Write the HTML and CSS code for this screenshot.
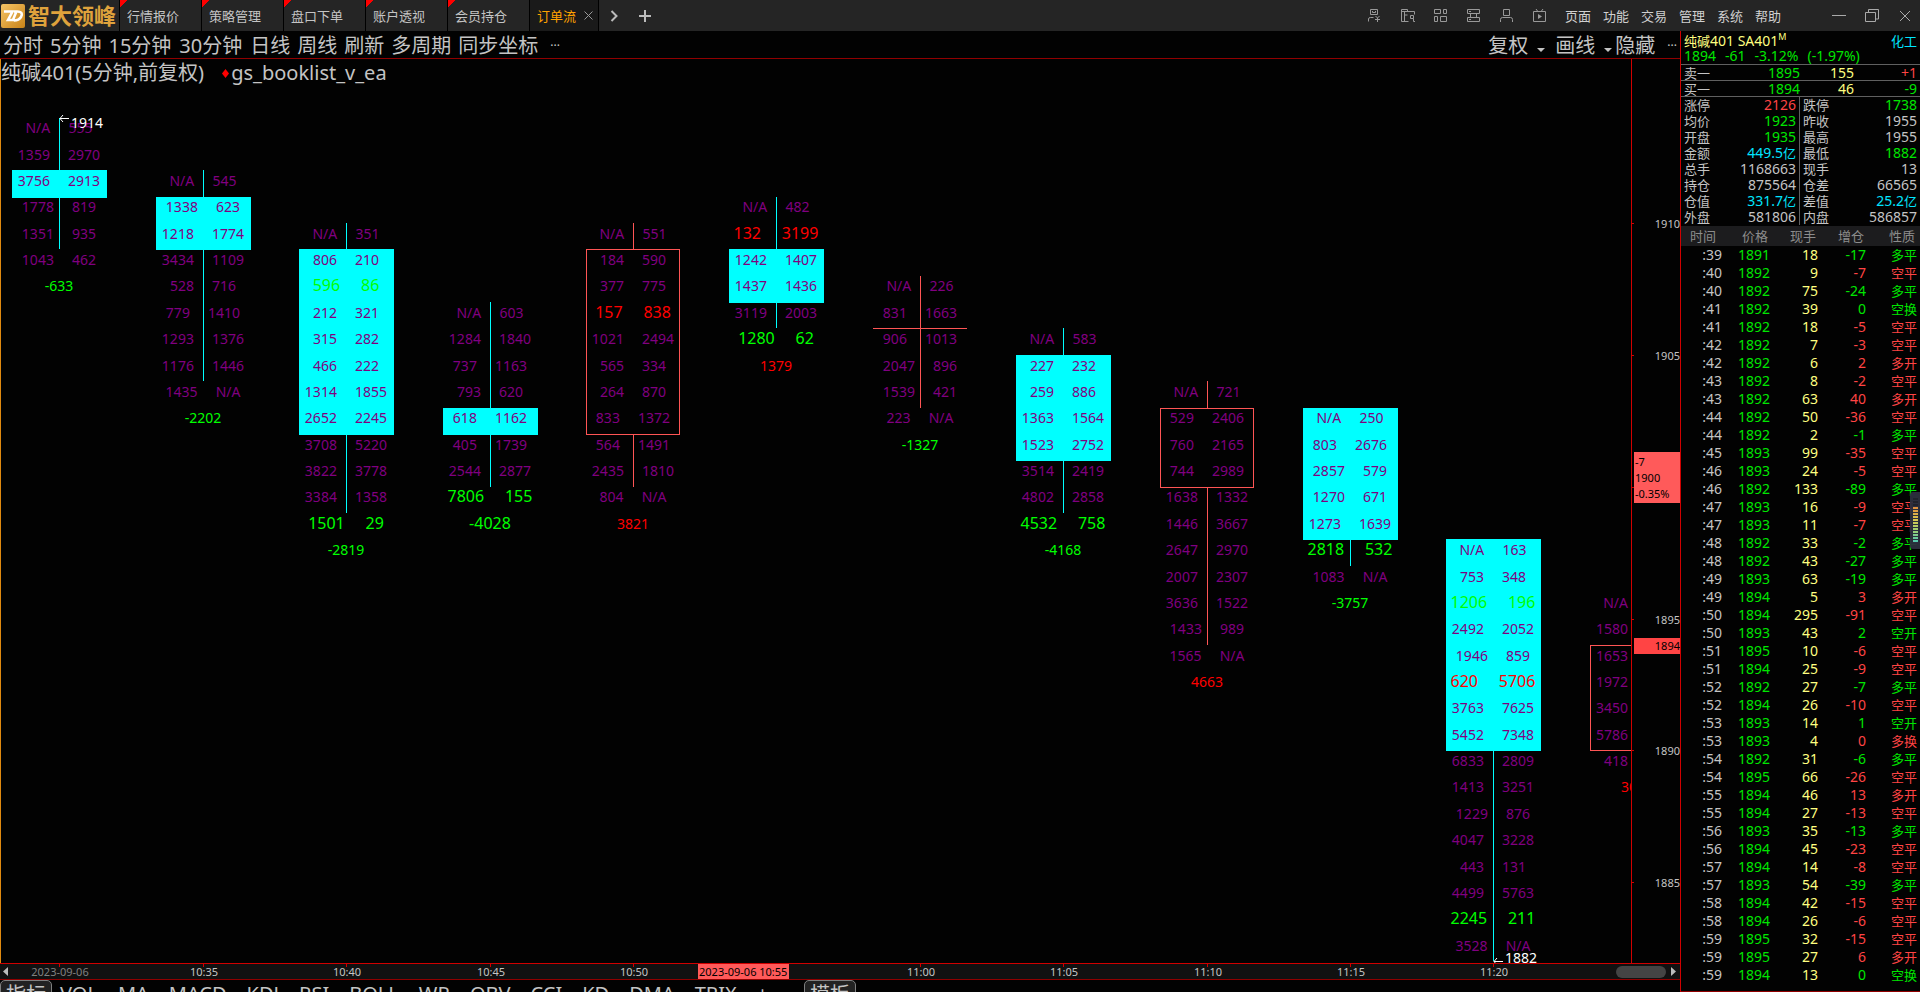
FILE: index.html
```html
<!DOCTYPE html>
<html lang="zh-CN">
<head>
<meta charset="utf-8">
<title>智大领峰</title>
<link rel="stylesheet" href="styles.css">
</head>
<body>
<header class="topbar">
  <div class="brand">
    <svg class="brand-mark" viewBox="0 0 24 24" aria-hidden="true">
      <defs><linearGradient id="gold" x1="0" y1="0" x2="1" y2="1"><stop offset="0" stop-color="#f6c566"/><stop offset="1" stop-color="#c98318"/></linearGradient></defs>
      <rect width="24" height="24" rx="2" fill="url(#gold)"/>
      <path d="M3 7.500h8.500L7 16h4.500M11.500 17l3.500-8.500M13 7.500h3c5.500 0 5.500 3 4 5.500c-1.500 2.500-3.500 3.500-7 3.500" fill="none" stroke="#fff" stroke-width="2.600"/>
    </svg>
    <span class="brand-name">智大领峰</span>
  </div>
  <nav class="tabs">
    <button class="tab">行情报价</button>
    <button class="tab">策略管理</button>
    <button class="tab">盘口下单</button>
    <button class="tab">账户透视</button>
    <button class="tab">会员持仓</button>
    <button class="tab tab-active">订单流
      <svg width="9" height="9" viewBox="0 0 9 9" aria-hidden="true"><path d="M.5.5l8 8M8.500.5l-8 8" stroke="#999" fill="none"/></svg>
    </button>
    <button class="tab-tool" aria-label="下一页"><svg width="8" height="12" viewBox="0 0 8 12"><path d="M1.500 1l5 5-5 5" stroke="#bbb" stroke-width="2" fill="none"/></svg></button>
    <button class="tab-tool" aria-label="新建"><svg width="12" height="12" viewBox="0 0 12 12"><path d="M6 0v12M0 6h12" stroke="#bbb" stroke-width="2" fill="none"/></svg></button>
  </nav>
  <div class="icons">
    <button aria-label="资金账户"><svg viewBox="0 0 13 13"><path d="M2.500.5h7v5h-7zM4.500 2v1.500h3V2M.5 12.500V10q0-1.500 2-1.500h3M7.500 7l2 2 2-2M9.500 9v4M7 10.500h5"/></svg></button>
    <button aria-label="行情查询"><svg viewBox="0 0 13 13"><path d="M13.500 5.500V2.500H.5M.5.5v12h7M.5.5h6v2M3.500 3v9M3.500 6h3M9.500 6.500h3v3h-3zM12.500 9.500v3h1.500"/></svg></button>
    <button aria-label="布局"><svg viewBox="0 0 13 13"><path d="M.5.5h6v4h-6zM9.500.5h3v4h-3zM.5 7.500h3v5h-3zM6.500 7.500h6v5h-6z"/></svg></button>
    <button aria-label="服务器"><svg viewBox="0 0 13 13"><path d="M.5.5h12v4H.5zM.5 8.500h12v4H.5zM3.500 4.500v4M9.500 4.500v4M2 2.500h2M2 10.500h2"/></svg></button>
    <button aria-label="用户"><svg viewBox="0 0 13 13"><path d="M3.500.5h6v6h-6zM.5 13v-2.500q0-2 2-2h8q2 0 2 2V13"/></svg></button>
    <button aria-label="视频"><svg viewBox="0 0 13 13"><path d="M.5 2.500h12v10H.5zM3 0l1.500 2M10 0L8.500 2"/><path class="solid" d="M5 5l4 2.500L5 10z"/></svg></button>
  </div>
  <nav class="menu">
    <button>页面</button><button>功能</button><button>交易</button><button>管理</button><button>系统</button><button>帮助</button>
  </nav>
  <div class="window-buttons">
    <button aria-label="最小化"><svg viewBox="0 0 14 14"><path d="M0 6.500h14"/></svg></button>
    <button aria-label="还原"><svg viewBox="0 0 14 14"><path d="M.5 3.500h10v9H.5zM3.500 3V.5h10V10h-2.500"/></svg></button>
    <button aria-label="关闭"><svg viewBox="0 0 14 14"><path d="M2 2l10 10M12 2L2 12"/></svg></button>
  </div>
</header>

<div class="workspace">
  <main class="chart-pane">
    <div class="toolbar">
      <button>分时</button><button>5分钟</button><button>15分钟</button><button>30分钟</button><button>日线</button><button>周线</button><button>刷新</button><button>多周期</button><button>同步坐标</button><button class="more">···</button>
      <span class="spacer"></span>
      <button class="drop">复权</button><button class="drop drop-tight">画线</button><button class="hide">隐藏</button><button class="more">···</button>
    </div>
    <section class="plot-row">
      <div class="plot">
        <h1 class="plot-title">纯碱401(5分钟,前复权)<svg width="7" height="9" viewBox="0 0 7 9" aria-hidden="true"><path d="M3.500 0L7 4.500 3.500 9 0 4.500z" fill="#f00"/></svg>gs_booklist_v_ea</h1>
        <svg class="canvas" id="plot" aria-label="订单流"></svg>
      </div>
      <svg class="price-axis" id="price-axis" aria-label="价格轴"></svg>
    </section>
    <div class="time-row">
      <svg class="time-axis" id="time-axis" aria-label="时间轴"></svg>
      <span class="thumb"></span>
      <svg class="arrow-right" width="5" height="9" viewBox="0 0 5 9" aria-hidden="true"><path d="M0 0l5 4.500L0 9z" fill="#bbb"/></svg>
    </div>
    <div class="indicators">
      <button class="boxed">指标</button><button>VOL</button><button>MA</button><button>MACD</button><button>KDJ</button><button>RSI</button><button>BOLL</button><button>WR</button><button>OBV</button><button>CCI</button><button>KD</button><button>DMA</button><button>TRIX</button><button>+</button><button class="more">···</button><button class="boxed">模板</button>
    </div>
  </main>

  <aside class="quote">
    <div class="quote-head">
      <span class="yellow"><b>纯碱</b>401 SA401<sup>M</sup></span>
      <a class="cyan" href="#sector"><b>化工</b></a>
    </div>
    <div class="quote-change green"><span>1894</span><span>-61</span><span>-3.12%</span><span>(-1.97%)</span></div>
    <div class="book-row"><b>卖一</b><span class="green">1895</span><span class="yellow">155</span><span class="red">+1</span></div>
    <div class="book-row"><b>买一</b><span class="green">1894</span><span class="yellow">46</span><span class="green">-9</span></div>
    <div class="stats">
      <dl>
        <div><dt>涨停</dt><dd class="red">2126</dd></div>
        <div><dt>均价</dt><dd class="green">1923</dd></div>
        <div><dt>开盘</dt><dd class="green">1935</dd></div>
        <div><dt>金额</dt><dd class="cyan">449.5<b>亿</b></dd></div>
        <div><dt>总手</dt><dd>1168663</dd></div>
        <div><dt>持仓</dt><dd>875564</dd></div>
        <div><dt>仓值</dt><dd class="cyan">331.7<b>亿</b></dd></div>
        <div><dt>外盘</dt><dd>581806</dd></div>
      </dl>
      <dl>
        <div><dt>跌停</dt><dd class="green">1738</dd></div>
        <div><dt>昨收</dt><dd>1955</dd></div>
        <div><dt>最高</dt><dd>1955</dd></div>
        <div><dt>最低</dt><dd class="green">1882</dd></div>
        <div><dt>现手</dt><dd>13</dd></div>
        <div><dt>仓差</dt><dd>66565</dd></div>
        <div><dt>差值</dt><dd class="cyan">25.2<b>亿</b></dd></div>
        <div><dt>内盘</dt><dd>586857</dd></div>
      </dl>
    </div>
    <table class="trades">
      <thead><tr><th>时间</th><th>价格</th><th>现手</th><th>增仓</th><th>性质</th></tr></thead>
      <tbody id="trades"></tbody>
    </table>
    <div class="meter" aria-hidden="true"><span></span></div>
  </aside>
</div>
<script src="app.js"></script>
</body>
</html>
```
FILE: styles.css
```css
* { box-sizing: border-box; }

body {
  margin: 0;
  height: 100vh;
  display: flex;
  flex-direction: column;
  overflow: hidden;
  background: #020202;
  color: #c4c4c4;
  font-family: "Noto Sans", "Noto Sans CJK SC", sans-serif;
  font-size: 14px;
}

button {
  margin: 0;
  padding: 0;
  border: 0;
  background: none;
  color: inherit;
  font: inherit;
  line-height: inherit;
  white-space: nowrap;
}

b { font-weight: 400; font-size: 13px; }
svg { display: block; flex: none; }

.green { color: #00e600; }
.red { color: #ff4444; }
.yellow { color: #ffff80; }
.cyan { color: #00e5ff; }

/* Top bar */
.topbar {
  flex: none;
  display: flex;
  align-items: center;
  height: 31px;
  background: #252525;
  font-size: 13px;
  line-height: 20px;
}
.brand {
  display: flex;
  align-items: center;
  gap: 3px;
  width: 119px;
  padding-left: 1px;
}
.brand-mark { width: 24px; height: 24px; }
.brand-name {
  color: #dfa23c;
  font-size: 22px;
  font-weight: 700;
  line-height: 28px;
  padding-bottom: 2px;
}
.tabs {
  display: flex;
  align-items: center;
  align-self: stretch;
  flex: 1;
}
.tab {
  align-self: stretch;
  width: 82px;
  padding: 0 0 0 7px;
  border-left: 1px solid #000;
  text-align: left;
  background: linear-gradient(135deg, #f00 5px, transparent 5px);
}
.tab-active {
  display: flex;
  align-items: center;
  gap: 8px;
  width: 70px;
  border-right: 1px solid #000;
  background: #1a1a1a;
  color: #ffa200;
}
.tab-tool { padding: 0 12px 0 11px; }
.tab-tool + .tab-tool { padding-left: 9px; }

.icons { display: flex; gap: 19px; margin-right: 18px; }
.icons button { width: 14px; }
.icons svg { width: 13px; height: 13px; overflow: visible; fill: none; stroke: #999; }
.icons .solid { fill: #999; stroke: none; }
.menu { display: flex; gap: 12px; color: #d0d0d0; }
.window-buttons { display: flex; gap: 19px; margin: 0 8px 0 51px; }
.window-buttons svg { width: 14px; height: 14px; fill: none; stroke: #aaa; }

/* Main split */
.workspace {
  flex: 1;
  min-height: 0;
  display: grid;
  grid-template-columns: minmax(0, 1fr) 240px;
}
.chart-pane { display: flex; flex-direction: column; min-height: 0; min-width: 0; }

.toolbar {
  flex: none;
  display: flex;
  align-items: center;
  gap: 7px;
  height: 28px;
  padding: 2px 3px 0;
  border-bottom: 1px solid #900000;
  font-size: 20px;
  line-height: 26px;
}
.toolbar button:nth-child(n + 4):nth-child(-n + 5) { margin-left: 1px; }
.toolbar .more { padding-left: 5px; font-size: 12px; }
.spacer { flex: 1; }
.drop { display: flex; align-items: center; gap: 9px; margin-right: 3px; }
.drop-tight { margin-right: -4px; }
.drop::after {
  content: "";
  margin-top: 8px;
  border: 4px solid transparent;
  border-bottom: 0;
  border-top-color: #c4c4c4;
}

.plot-row { flex: 1; display: flex; min-height: 0; border-bottom: 1px solid #d00000; }
.plot {
  position: relative;
  flex: 1;
  min-width: 0;
  overflow: hidden;
  border-left: 1px solid #e08a10;
}
.plot-title {
  position: absolute;
  top: 0;
  left: 0;
  display: flex;
  align-items: center;
  margin: 0;
  font-size: 20px;
  font-weight: 400;
  line-height: 28px;
}
.plot-title svg { margin: 0 2px 0 18px; }
.canvas { width: 100%; height: 100%; }
.price-axis { width: 49px; height: 100%; border-left: 1px solid #d00000; font-size: 11px; }

.level { fill: #800080; white-space: pre; text-anchor: middle; }
.level-buy { fill: #f00; font-size: 16px; }
.level-sell { fill: #0f0; font-size: 16px; }
.delta-up { fill: #f00; text-anchor: middle; }
.delta-down { fill: #0f0; text-anchor: middle; }
.delta-big { font-size: 16px; }
.clipped { text-anchor: end; }
.clipped-start { text-anchor: start; }
.bar-down { fill: #0ff; }
.bar-up { fill: none; stroke: #ff5555; }
.wick-down { stroke: #0ff; }
.wick-up { stroke: #ff5555; }
.extreme { fill: #fff; }
.pointer { stroke: #fff; fill: none; }
.axis-text { fill: #c4c4c4; }
.axis-date { fill: #808080; }
.axis-end { text-anchor: end; }
.axis-middle { text-anchor: middle; }
.tick { stroke: #d00000; }
.cursor-box { fill: #ff5a5a; }
.last-box { fill: #ff4444; }
.cursor-text { fill: #000; }

.time-row {
  flex: none;
  display: flex;
  align-items: center;
  height: 16px;
  padding-right: 4px;
  border-bottom: 1px solid #900000;
  background: #111;
  font-size: 11px;
}
.time-axis { flex: 1; min-width: 0; height: 15px; }
.thumb { width: 50px; height: 12px; margin-right: 5px; border-radius: 6px; background: #444; }

.indicators {
  flex: none;
  display: flex;
  gap: 20px;
  height: 12px;
  overflow: hidden;
  font-size: 20px;
  line-height: 28px;
}
.indicators button { flex: none; height: 28px; }
.indicators .boxed {
  width: 52px;
  margin-right: -12px;
  border: 1px solid #808080;
  border-radius: 5px;
  background: #222;
}
.indicators .more { margin: 0 -12px 0 -2px; font-size: 12px; }

/* Quote panel */
.quote {
  position: relative;
  display: flex;
  flex-direction: column;
  border-left: 1px solid #d00000;
  border-bottom: 1px solid #900000;
  line-height: 16px;
}
.quote-head {
  display: flex;
  justify-content: space-between;
  height: 17px;
  padding: 2px 3px 0;
}
.quote-head a { text-decoration: none; }
.quote-head sup { font-size: 9px; line-height: 8px; }
.quote-change { display: flex; gap: 9px; height: 16px; padding: 0 3px; }
.book-row {
  display: grid;
  grid-template-columns: 41px 75px 54px 1fr;
  height: 16px;
  padding: 0 3px;
  border-top: 1px solid #606060;
  text-align: right;
}
.book-row b { text-align: left; }
.stats {
  display: grid;
  grid-template-columns: 119px 1fr;
  padding-bottom: 1px;
  border-top: 1px solid #606060;
}
.stats dl { margin: 0; padding: 0 3px; }
.stats dl:first-child { border-right: 1px solid #606060; }
.stats dl > div { display: flex; justify-content: space-between; height: 16px; }
.stats dt { font-size: 13px; }
.stats dd { margin: 0; }

.trades {
  width: 100%;
  table-layout: fixed;
  border-collapse: collapse;
  line-height: 18px;
  text-align: right;
}
.trades th {
  height: 20px;
  padding: 0 2px 0 0;
  background: #1c1c1e;
  color: #8c8c8c;
  font-size: 13px;
  font-weight: 400;
}
.trades th:first-child { width: 41px; padding-right: 6px; }
.trades th:nth-child(2), .trades th:nth-child(3), .trades th:nth-child(4) { width: 48px; }
.trades th:last-child { padding-right: 5px; }
.trades td { height: 18px; padding: 0; }
.trades td:last-child { padding-right: 3px; font-size: 13px; }

.meter {
  position: absolute;
  right: 0;
  top: 461px;
  width: 10px;
  height: 57px;
  padding: 6px 2px 6px 3px;
  border-radius: 3px 0 0 3px;
  background: rgba(44, 47, 62, 0.95);
}
.meter span {
  display: block;
  height: 45px;
  background:
    repeating-linear-gradient(transparent 0 2px, #2c2f3e 2px 3px),
    linear-gradient(#20222c 0 8px, #e0883c 8px, #d8c850 22px, #9ed070 32px, #4cc8b8 45px);
}
```
FILE: app.js
```js
const NS = 'http://www.w3.org/2000/svg';

function draw(parent, name, attrs, text) {
  const el = document.createElementNS(NS, name);
  for (const key in attrs) el.setAttribute(key, attrs[key]);
  if (text !== undefined) el.textContent = text;
  parent.appendChild(el);
  return el;
}

/* Vertical scale: one price step per row of the order book */
const ROW = 26.37;
const priceY = p => Math.round(164 + (1910 - p) * ROW);
const textY = p => Math.round(179.7 + (1910 - p) * ROW);
const barX = i => Math.round(58.4 + i * 143.4);

/* rows: "bid ask", with + for heavy buying and - for heavy selling */
const bars = [
  { high: 1914, low: 1909, top: 1912, bottom: 1911, delta: '-633',
    rows: 'N/A 555,1359 2970,3756 2913,1778 819,1351 935,1043 462' },
  { high: 1912, low: 1904, top: 1911, bottom: 1909, delta: '-2202',
    rows: 'N/A 545,1338 623,1218 1774,3434 1109,528 716,779 1410,1293 1376,1176 1446,1435 N/A' },
  { high: 1910, low: 1899, top: 1909, bottom: 1902, delta: '-2819',
    rows: 'N/A 351,806 210,-596 86,212 321,315 282,466 222,1314 1855,2652 2245,3708 5220,3822 3778,3384 1358,-1501 29' },
  { high: 1907, low: 1900, top: 1903, bottom: 1902, delta: '-4028', big: true,
    rows: 'N/A 603,1284 1840,737 1163,793 620,618 1162,405 1739,2544 2877,-7806 155' },
  { high: 1910, low: 1900, top: 1909, bottom: 1902, up: true, delta: '3821',
    rows: 'N/A 551,184 590,377 775,+157 838,1021 2494,565 334,264 870,833 1372,564 1491,2435 1810,804 N/A' },
  { high: 1911, low: 1906, top: 1909, bottom: 1907, delta: '1379',
    rows: 'N/A 482,+132 3199,1242 1407,1437 1436,3119 2003,-1280 62' },
  { high: 1908, low: 1903, top: 1906, bottom: 1906, up: true, delta: '-1327',
    rows: 'N/A 226,831 1663,906 1013,2047 896,1539 421,223 N/A' },
  { high: 1906, low: 1899, top: 1905, bottom: 1901, delta: '-4168',
    rows: 'N/A 583,227 232,259 886,1363 1564,1523 2752,3514 2419,4802 2858,-4532 758' },
  { high: 1904, low: 1894, top: 1903, bottom: 1900, up: true, delta: '4663',
    rows: 'N/A 721,529 2406,760 2165,744 2989,1638 1332,1446 3667,2647 2970,2007 2307,3636 1522,1433 989,1565 N/A' },
  { high: 1903, low: 1897, top: 1903, bottom: 1898, delta: '-3757',
    rows: 'N/A 250,803 2676,2857 579,1270 671,1273 1639,-2818 532,1083 N/A' },
  { high: 1898, low: 1882, top: 1898, bottom: 1890, delta: '',
    rows: 'N/A 163,753 348,-1206 196,2492 2052,1946 859,+620 5706,3763 7625,5452 7348,6833 2809,1413 3251,1229 876,4047 3228,443 131,4499 5763,-2245 211,3528 N/A' },
  { high: 1896, low: 1890, top: 1894, bottom: 1890, up: true, delta: '30', clipped: true,
    rows: 'N/A,1580,1653,1972,3450,5786,418' }
];

const plot = document.getElementById('plot');
bars.forEach((bar, i) => {
  const x = barX(i), kind = bar.up ? 'up' : 'down';
  const top = priceY(bar.top), bottom = priceY(bar.bottom);
  const wick = (from, to) => draw(plot, 'path', { class: 'wick-' + kind, d: `M${x + 0.5} ${from}V${to}` });
  if (top === bottom) {
    wick(priceY(bar.high), priceY(bar.low));
    draw(plot, 'path', { class: 'wick-up', d: `M${x - 47} ${top + 0.5}H${x + 47}` });
  } else {
    wick(priceY(bar.high), top);
    wick(bottom, priceY(bar.low));
    if (bar.up) draw(plot, 'rect', { class: 'bar-up', x: x - 46.5, y: top + 0.5, width: 93, height: bottom - top });
    else draw(plot, 'rect', { class: 'bar-down', x: x - 47, y: top, width: 95, height: bottom - top + 1 });
  }
  const first = bar.high;
  const rows = bar.rows.split(',');
  rows.forEach((row, n) => {
    const mark = row[0] === '+' ? ' level-buy' : row[0] === '-' ? ' level-sell' : '';
    const text = row.replace(/^[+-]/, '').replace(' ', '     ');
    draw(plot, 'text', {
      class: 'level' + mark + (bar.clipped ? ' clipped' : ''),
      x: bar.clipped ? x - 9 : x,
      y: textY(first - n)
    }, text);
  });
  if (bar.delta) {
    draw(plot, 'text', {
      class: (bar.delta[0] === '-' ? 'delta-down' : 'delta-up') + (bar.big ? ' delta-big' : '') + (bar.clipped ? ' clipped-start' : ''),
      x: bar.clipped ? x - 16 : x,
      y: textY(first - rows.length)
    }, bar.delta);
  }
});

/* Highest and lowest traded price */
[[0, 1914, 59, 69], [10, 1882, 902, 904]].forEach(([i, label, arrowY, labelY]) => {
  const x = barX(i) + 1;
  draw(plot, 'path', { class: 'pointer', d: `M${x} ${arrowY + 0.5}h9M${x + 3} ${arrowY - 3}l-3 3.500 3 3.500` });
  draw(plot, 'text', { class: 'extreme', x: x + 11, y: labelY }, label);
});

const priceAxis = document.getElementById('price-axis');
[1910, 1905, 1900, 1895, 1890, 1885].forEach(p => {
  const y = priceY(p);
  draw(priceAxis, 'path', { class: 'tick', d: `M0 ${y + 0.5}h2` });
  if (p !== 1900) draw(priceAxis, 'text', { class: 'axis-text axis-end', x: 48, y: y + 5 }, p);
});
draw(priceAxis, 'rect', { class: 'cursor-box', x: 2, y: 393, width: 46, height: 51 });
['-7', '1900', '-0.35%'].forEach((t, n) =>
  draw(priceAxis, 'text', { class: 'cursor-text', x: 3, y: 407 + n * 16 }, t));
draw(priceAxis, 'rect', { class: 'last-box', x: 2, y: 579, width: 46, height: 16 });
draw(priceAxis, 'text', { class: 'cursor-text axis-end', x: 48, y: 591 }, '1894');

const timeAxis = document.getElementById('time-axis');
draw(timeAxis, 'path', { fill: '#bbb', d: 'M8 3v9L3 7.500z' });
['2023-09-06', '10:35', '10:40', '10:45', '10:50', '10:55', '11:00', '11:05', '11:10', '11:15', '11:20'].forEach((t, i) => {
  const x = barX(i) + 1;
  draw(timeAxis, 'path', { class: 'tick', d: `M${x + 0.5} 0v3` });
  if (i !== 5) draw(timeAxis, 'text', { class: (i ? 'axis-text' : 'axis-date') + ' axis-middle', x: x + 1, y: 12 }, t);
});
draw(timeAxis, 'rect', { class: 'cursor-box', x: 698, y: 0, width: 91, height: 15 });
draw(timeAxis, 'text', { class: 'cursor-text', x: 699, y: 12 }, '2023-09-06 10:55');

/* time, price, volume, open-interest change, kind, colour */
const trades = `39 1891 18 -17 多平 g|40 1892 9 -7 空平 r|40 1892 75 -24 多平 g|41 1892 39 0 空换 g|41 1892 18 -5 空平 r
42 1892 7 -3 空平 r|42 1892 6 2 多开 r|43 1892 8 -2 空平 r|43 1892 63 40 多开 r|44 1892 50 -36 空平 r|44 1892 2 -1 多平 g
45 1893 99 -35 空平 r|46 1893 24 -5 空平 r|46 1892 133 -89 多平 g|47 1893 16 -9 空平 r|47 1893 11 -7 空平 r|48 1892 33 -2 多平 g
48 1892 43 -27 多平 g|49 1893 63 -19 多平 g|49 1894 5 3 多开 r|50 1894 295 -91 空平 r|50 1893 43 2 空开 g|51 1895 10 -6 空平 r
51 1894 25 -9 空平 r|52 1892 27 -7 多平 g|52 1894 26 -10 空平 r|53 1893 14 1 空开 g|53 1893 4 0 多换 r|54 1892 31 -6 多平 g
54 1895 66 -26 空平 r|55 1894 46 13 多开 r|55 1894 27 -13 空平 r|56 1893 35 -13 多平 g|56 1894 45 -23 空平 r|57 1894 14 -8 空平 r
57 1893 54 -39 多平 g|58 1894 42 -15 空平 r|58 1894 26 -6 空平 r|59 1895 32 -15 空平 r|59 1895 27 6 多开 r|59 1894 13 0 空换 g`;
const body = document.getElementById('trades');
trades.split(/[|\n]/).forEach(line => {
  const [time, price, volume, change, kind, side] = line.split(' ');
  const color = side === 'g' ? 'green' : 'red';
  const tr = body.insertRow();
  [[':' + time, ''], [price, 'green'], [volume, 'yellow'], [change, color], [kind, color]].forEach(([text, cls]) => {
    const td = tr.insertCell();
    td.textContent = text;
    td.className = cls;
  });
});
```
